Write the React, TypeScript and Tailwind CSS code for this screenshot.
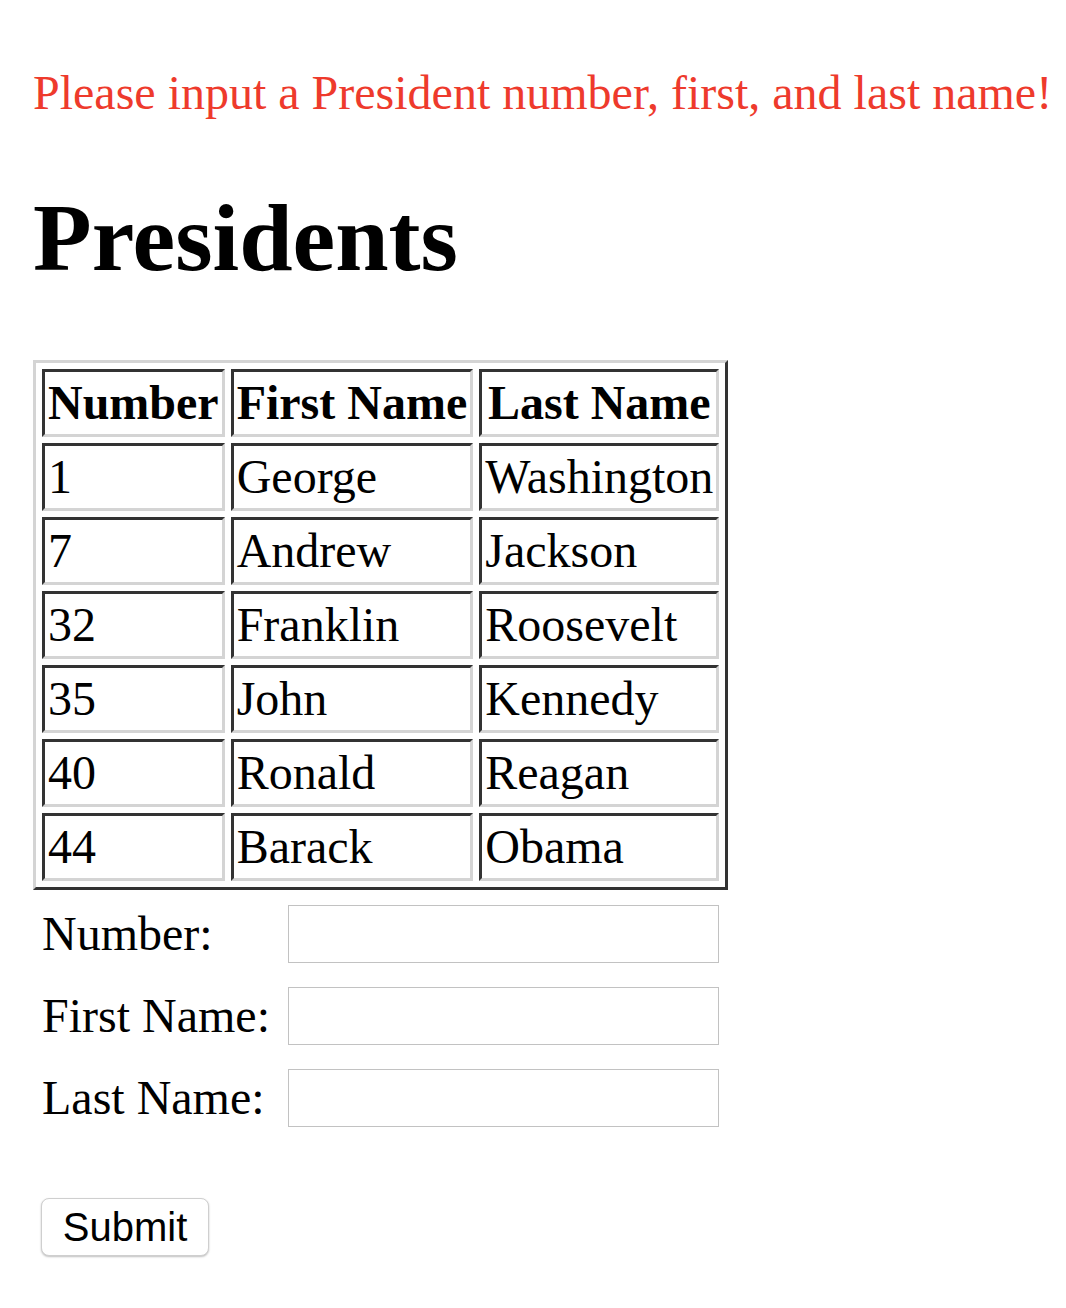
import React from "react";

const presidents = [
  { number: "1", first: "George", last: "Washington" },
  { number: "7", first: "Andrew", last: "Jackson" },
  { number: "32", first: "Franklin", last: "Roosevelt" },
  { number: "35", first: "John", last: "Kennedy" },
  { number: "40", first: "Ronald", last: "Reagan" },
  { number: "44", first: "Barack", last: "Obama" },
];

const cell =
  "border-[3px] border-t-[#333333] border-l-[#333333] border-r-[#d4d4d4] border-b-[#d4d4d4] p-[3px] leading-[56px]";

export default function App() {
  return (
    <div className="min-h-[1308px] bg-white pl-[33px] pt-[65px] text-black [font-family:'Liberation_Serif','Times_New_Roman',serif]">
      <p className="text-[48px] leading-[56px] text-[#ee3a2c]">
        Please input a President number, first, and last name!
      </p>

      <h1 className="mt-[62px] text-[96px] font-bold leading-[110px]">Presidents</h1>

      <table className="mt-[67px] border-separate border-spacing-[6px] border-[3px] border-t-[#d4d4d4] border-l-[#d4d4d4] border-r-[#333333] border-b-[#333333] text-[48px]">
        <thead>
          <tr>
            <th className={`${cell} text-center font-bold`}>Number</th>
            <th className={`${cell} text-center font-bold`}>First Name</th>
            <th className={`${cell} text-center font-bold`}>Last Name</th>
          </tr>
        </thead>
        <tbody>
          {presidents.map((p) => (
            <tr key={p.number}>
              <td className={`${cell} text-left`}>{p.number}</td>
              <td className={`${cell} text-left`}>{p.first}</td>
              <td className={`${cell} text-left`}>{p.last}</td>
            </tr>
          ))}
        </tbody>
      </table>

      <form className="mt-[15px] flex flex-col gap-[24px] pl-[9px]" onSubmit={(e) => e.preventDefault()}>
        {["Number:", "First Name:", "Last Name:"].map((label) => (
          <div key={label} className="flex items-center">
            <label className="w-[246px] text-[48px] leading-[56px]">{label}</label>
            <input
              type="text"
              className="h-[58px] w-[431px] border border-[#c2c2c2] bg-white px-2 text-[40px] outline-none"
            />
          </div>
        ))}

        <div className="mt-[47px]">
          <button
            type="submit"
            className="-ml-[1px] h-[58px] w-[168px] rounded-[8px] border border-[#cfcfcf] bg-white text-[40px] leading-none text-black shadow-[0_1px_2px_rgba(0,0,0,0.25)] [font-family:'Liberation_Sans',Arial,sans-serif]"
          >
            Submit
          </button>
        </div>
      </form>
    </div>
  );
}
